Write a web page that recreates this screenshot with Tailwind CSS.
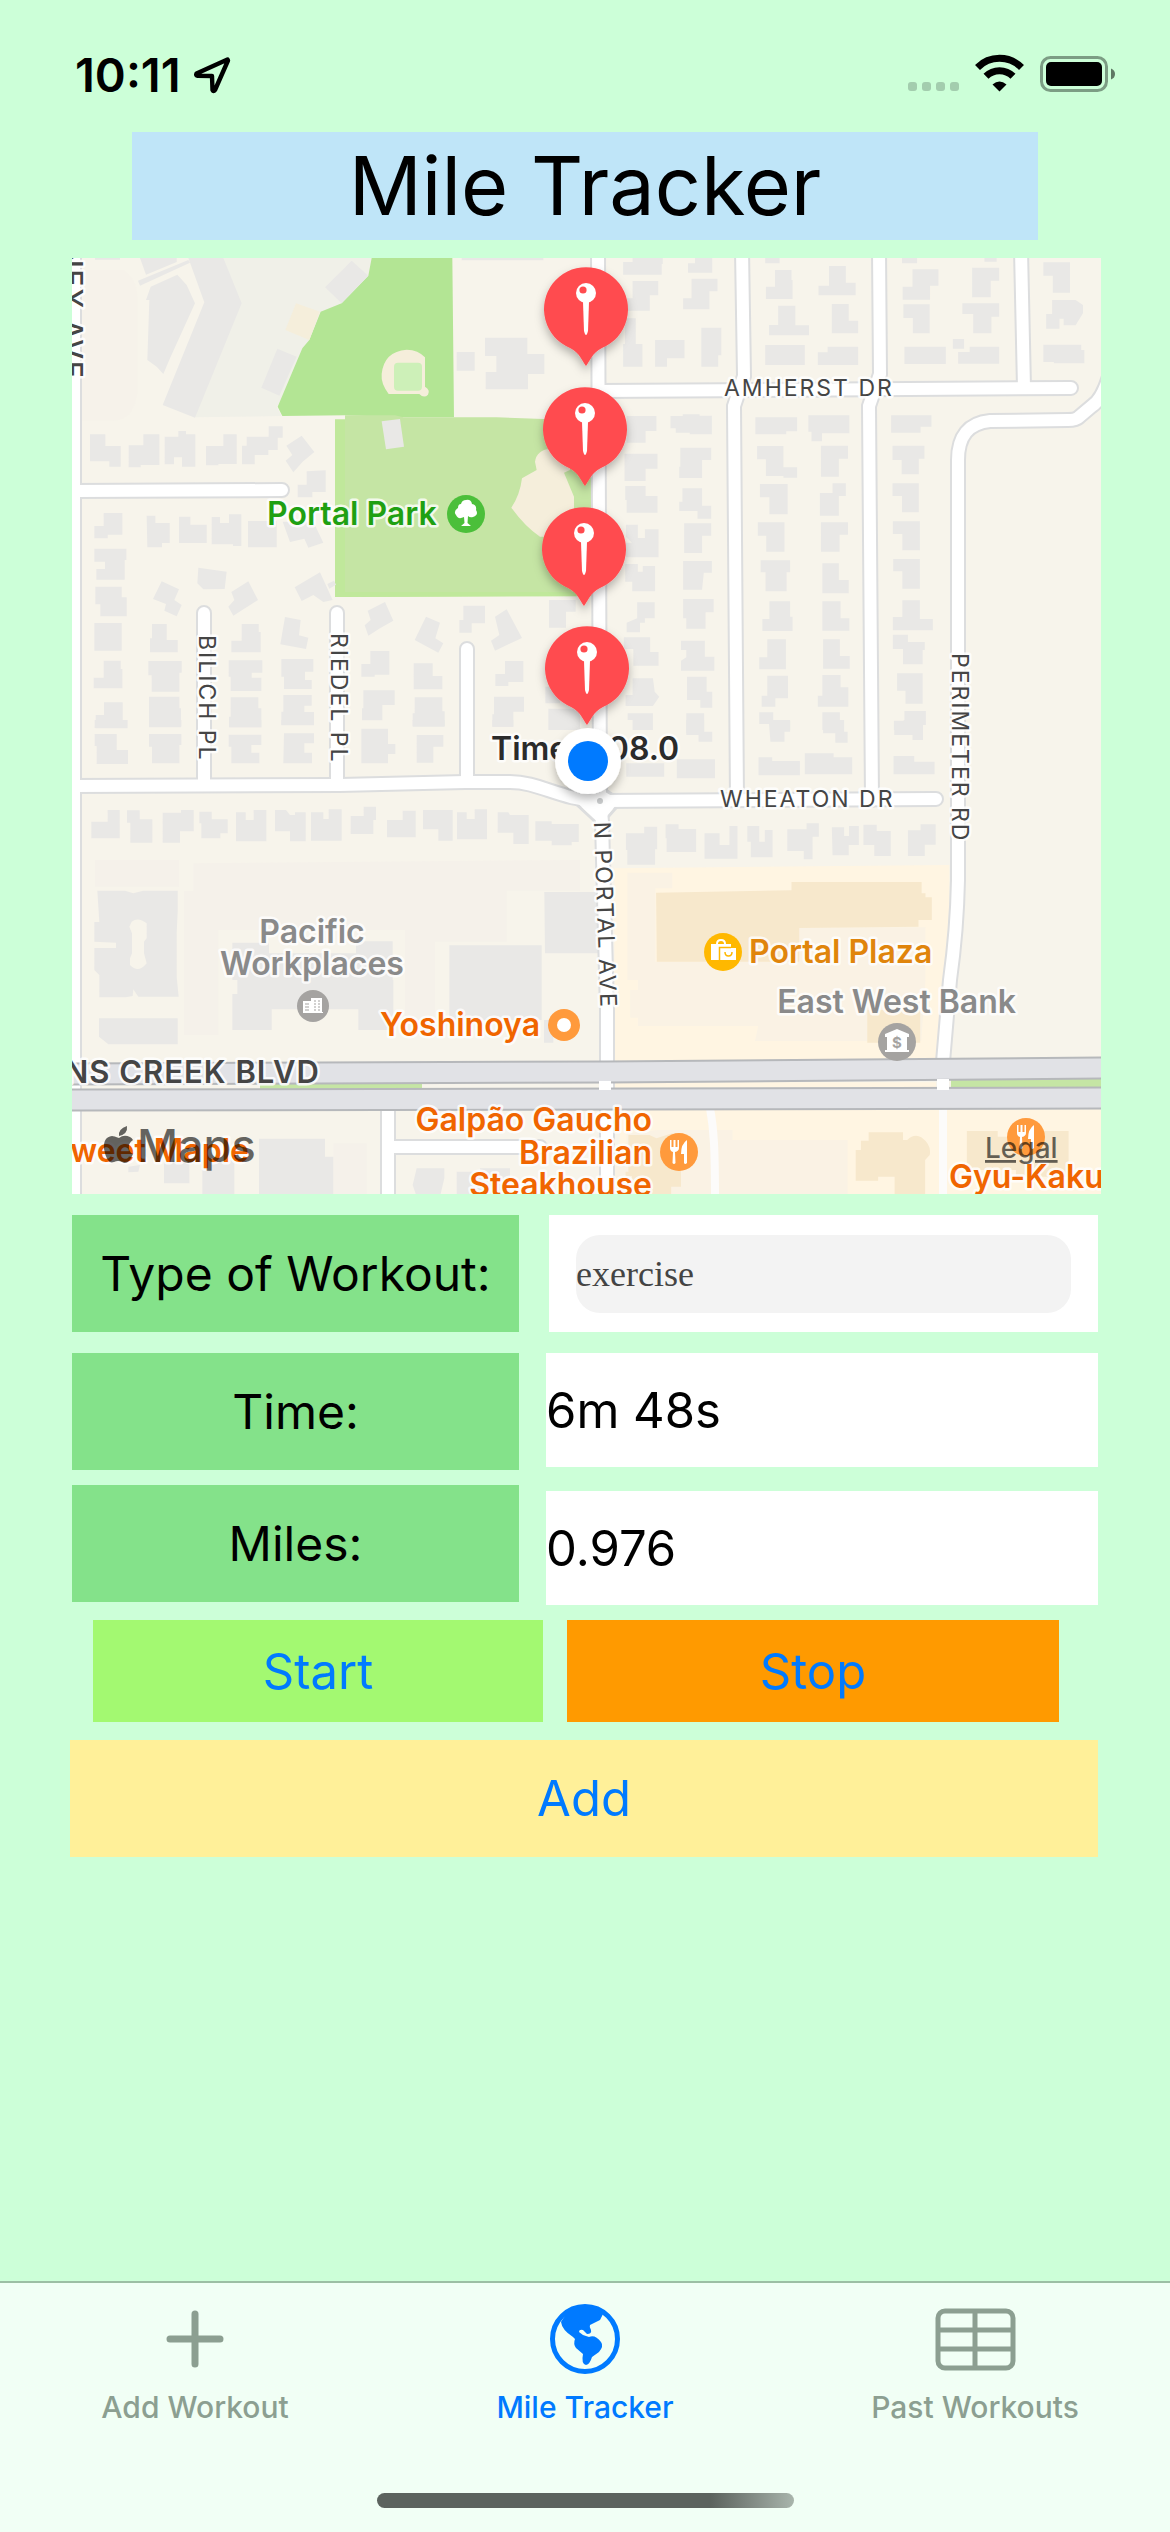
<!DOCTYPE html>
<html lang="en">
<head>
<meta charset="utf-8">
<meta name="viewport" content="width=device-width, initial-scale=1">
<title>Mile Tracker</title>
<script src="https://cdn.jsdelivr.net/npm/@tailwindcss/browser@4"></script>
</head>
<body class="flex min-h-screen flex-col bg-[#ccffd8] font-[Inter,sans-serif] text-black">

<!-- Status bar -->
<header class="flex h-[132px] items-start justify-between pt-[50px] pr-[54px] pl-[75px]">
  <div class="flex items-center gap-3">
    <span class="text-[47px] leading-[50px] font-semibold">10:11</span>
    <svg class="h-[38px] w-[38px]" viewBox="0 0 38 38" fill="none" stroke="#000" stroke-width="4.4" stroke-linejoin="round" aria-hidden="true"><path d="M34.5 3.5L3.5 17.5Q2.500 19.500 4.500 19.800L19 20L19.500 34Q20.500 36 22 34L35 4.500Z"/></svg>
  </div>
  <div class="flex items-center gap-4 pt-1">
    <svg class="h-[40px] w-[52px]" viewBox="0 0 52 40" fill="#a3cdae" aria-hidden="true"><rect x="1" y="28" width="9" height="9" rx="3"/><rect x="15" y="28" width="9" height="9" rx="3"/><rect x="29" y="28" width="9" height="9" rx="3"/><rect x="43" y="28" width="9" height="9" rx="3"/></svg>
    <svg class="h-[40px] w-[49px]" viewBox="0 0 49 40" fill="none" stroke="#000" aria-hidden="true"><path d="M2.500 13.500A31 31 0 0 1 46.500 13.500" stroke-width="7"/><path d="M11 22.300A19 19 0 0 1 38 22.300" stroke-width="7"/><path d="M24.500 37.500L17.500 30.500Q24.500 24.500 31.500 30.500Z" fill="#000" stroke="none"/></svg>
    <svg class="h-[40px] w-[76px]" viewBox="0 0 76 40" aria-hidden="true"><rect x="1.500" y="3.500" width="65" height="33" rx="9" fill="none" stroke="#7c9d84" stroke-width="3"/><rect x="6" y="8" width="56" height="24" rx="5"/><path d="M71 14.500Q75 16 75 20T71 25.500Z" fill="#5f7864"/></svg>
  </div>
</header>

<main class="flex flex-1 flex-col">
  <h1 class="mx-[132px] flex h-[108px] items-center justify-center bg-[#bfe5f8] text-[81px] leading-none">Mile Tracker</h1>

  <section class="mt-[18px] mr-[69px] ml-[72px]" aria-label="Route map">
    <svg class="block h-auto w-full" viewBox="72 258 1029 936">
      <defs>
        <filter id="drop" x="-40%" y="-40%" width="180%" height="180%"><feDropShadow dx="0" dy="5" stdDeviation="5" flood-opacity=".28"/></filter>
        <g id="pin">
          <path d="M0 57C-4 52 -6 44 -16 39A42 42 0 1 1 16 39C6 44 4 52 0 57Z" fill="#ff4b50"/>
          <circle cy="-16" r="10" fill="#fff"/><circle cx="-3" cy="-19" r="3.600" fill="#ff4b50"/>
          <path d="M-3 -7H3L2 22Q0 30 -2 22Z" fill="#fff"/>
        </g>
        <g id="fork" fill="#fff">
          <path d="M-9 -12V-4Q-9 -1 -6 0L-6.500 11Q-5 13 -3.500 11L-4 0Q0 -1 0 -4V-12H-1.500V-5H-3.500V-12H-5.500V-5H-7.500V-12Z"/>
          <path d="M8 -12V11Q6 13 5 11V2H2Q2 -8 8 -12Z"/>
        </g>
      </defs>

      <rect x="72" y="258" width="1029" height="936" fill="#f7f4eb"/>

      <!-- School grounds and parks -->
      <g transform="translate(60 250) scale(.33333)">
        <path d="M490 24H935V80L650 470L665 498L400 502Z" fill="#f0f0e8"/>
        <path d="M66 60H190Q232 90 232 140V430Q220 512 160 512H66Z" fill="#f6f2ea"/>
        <path d="M935 24H1177L1182 502H1030L855 496L667 498L653 470L727 295L748 270L782 185L845 160L925 77Z" fill="#b3e594"/>
        <path d="M825 508H870V1041H825Z" fill="#c0e89b"/>
        <path d="M855 496H1005L1030 502H1310L1600 512V1037L855 1041Z" fill="#c5e5a4"/>
        <path d="M825 1026H1600V1039L825 1041Z" fill="#c0e89b"/>
        <path d="M708 160L780 185L748 270L676 240Z" fill="#f5eedb"/>
        <path d="M1040 299Q1075 300 1095 322V410Q1112 420 1104 434Q1092 446 1078 432H986Q962 400 965 372Q972 304 1040 299Z" fill="#f5eedb"/>
        <rect x="1002" y="338" width="84" height="84" rx="12" fill="#cdf0b8"/>
        <path d="M1425 635Q1430 600 1470 596H1530V660L1512 668L1542 740V860H1440Q1395 830 1354 773Q1380 735 1386 685L1430 660Z" fill="#f5eedb"/>
        <path d="M965 514L1020 507L1032 590L978 598Z" fill="#e9e8e6"/>
      </g>

      <!-- Shopping district -->
      <g transform="translate(560 720) scale(.35075 .33333)">
        <path d="M155 445L1110 435V780L1075 1020L155 1024Z M180 1168H1545V1430H150Z M155 1087H1072V1103H155Z" fill="#fff5e2"/>
        <path d="M192 458H320V505H272V725H680V622H1042V780L1030 963H556L565 918H222V893H200V810H222V780H192Z M190 1240L280 1230H492V1260H820V1430H150V1300H190Z" fill="#faf2e4"/>
        <path d="M274 518L660 511V486H1031V520H1042V532H1060V600H1022V620L682 624V725H276Z M876 870H1027V968H876Z M195 1245H255L275 1255L320 1240L345 1260V1400H317V1430H205V1368H187V1355H195Z M880 1237H978V1260H990Q1010 1240 1030 1252Q1060 1275 1054 1305L1041 1320V1430H954V1370H907V1382H843V1290H858V1262H880Z M1160 1233H1248V1250H1380V1233H1450V1370H1300V1350H1160Z" fill="#f7e8cc"/>
      </g>

      <!-- Parking lots -->
      <g transform="translate(60 720) scale(.33333)" fill="#f5f1ea">
        <path d="M105 420H357V500H105Z M400 430L1560 420V512H1340V665H1125V945H1035V630H475V945H372V512H400Z M820 1270H920V1430H820Z"/>
      </g>

      <!-- Buildings, north-west blocks -->
      <g transform="translate(60 250) scale(.33333)" fill="#e9e8e6">
        <path d="M240 24H350V36L258 74Z M234 92L385 30L390 38L240 107Z M105 24H180V29H105Z M1205 24H1450V31H1205Z M272 110L352 74L380 105L405 160L330 325L310 372L290 350L262 330L268 150H258Z M385 24H490L545 160L405 503L308 465L433 157Z M875 32L925 77L845 160L795 112Z M652 296L710 320L658 437L604 413Z M1190 306H1244V362H1190Z M1275 263H1402V312H1453V372H1404V418H1277V366H1309V318H1275Z"/>
        <path d="M90 553H136V588H182V650H148V634H90Z M206 586H250V553H298V645H242V652H206Z M314 560H355V543H378V553H406V650H366V622H342V643H314Z M438 588H490V553H530V642H475V646H438Z M560 560H626V529H668V563H653V600H625V615H584V643H546V587H560Z M725 557L763 606L728 635L700 667L677 632L697 615L679 587Z M740 664L797 661V726H757V742H713V704H740Z"/>
        <path d="M103 828H131V789H187V854H143V865H103Z M260 797H286V819H329V879H306V892H262Z M357 800H391V824H440V879H357Z M455 801H480V819H507V793H544V888H519V883H455Z M564 813H650V892H564Z M668 815H760L790 878L745 893L733 866L690 876Z"/>
        <path d="M103 896H199V930H194V989H109V957H135V935H103Z M106 1010H185V1042H200V1099H121V1063H106Z M103 1119H185V1202H103Z M131 1232H182V1257H187V1315H101V1283H131Z M132 1357H188V1410H202V1435H107V1395H132Z"/>
        <path d="M415 953L500 965L494 1017L430 1018L412 1000Z M305 994L357 1018L343 1050L365 1065L350 1099L313 1082L318 1062L279 1047Z M565 994L594 1050L555 1075L520 1097L505 1070L523 1050L514 1026Z M780 967L818 1050L790 1056L760 1035L725 1053L704 1012Z M802 1002L822 992L828 1004L808 1016Z"/>
        <path d="M276 1122H320V1170H353V1207H270V1165H276Z M265 1233H365V1268H358V1325H275V1276H265Z M267 1340H358V1375H363V1432H267Z M545 1122H596V1146H602V1207H514V1172H545Z M506 1231H607V1268H575V1283H604V1323H512V1280H506Z M512 1342H595V1375H604V1432H507V1400H512Z M675 1101L722 1110L717 1156L745 1163L738 1197L661 1183Z M664 1227H760V1265H735V1290H755V1317H672V1280H664Z M670 1335H755V1367H733V1386H762V1424H664V1385H670Z"/>
        <path d="M975 1056L1000 1112L960 1135L925 1157L914 1126L932 1110L923 1082Z M931 1203H988V1274H944V1280H904V1242H931Z M910 1321H1004V1365H967V1411H906V1375H910Z M1098 1100L1140 1118L1126 1165L1150 1180L1135 1208L1064 1170Z M1061 1240H1118V1278H1147V1318H1061Z M1064 1342H1147V1384H1154V1430H1058V1390H1064Z M1210 1067H1275V1120H1235V1148H1198V1110H1210Z M1340 1078L1386 1164L1305 1202L1293 1172L1318 1155L1305 1100Z M1335 1233H1390V1296H1345V1308H1306V1272H1335Z M1302 1340H1392V1385H1360V1430H1297V1393H1302Z M1467 1050H1547V1085H1518V1133H1467Z M1456 1310H1500V1360H1456Z M1465 1376H1560V1440H1465Z"/>
      </g>

      <!-- Buildings, north-east blocks -->
      <g transform="translate(560 250) scale(.35075 .33333)" fill="#e9e8e6">
        <path d="M207 24H293V42H290V74H180V36H207Z M385 24H434V68H365V40H385Z M585 24H626V40H585Z M975 24H1018V40H975Z M1210 24H1245V35H1210Z M207 93H280V136H256V182H190V145H207Z M375 86H449V124H426V178H351V145H375Z M185 205H216V282H235V350H180V282H185Z M271 270H355V325H305V350H271Z M403 233H460V316H451V350H403Z"/>
        <path d="M613 60H660V90H663V147H587V110H613Z M767 48H815V98H843V136H737V107H767Z M622 167H671V226H710V256H596V225H622Z M775 162H823V212H850V250H775Z M585 285H698V345H585Z M763 290H850V345H735V307H763Z M1005 58H1079V107H1055V149H977V110H1005Z M1175 53H1252V92H1228V142H1175Z M979 163H1054V250H1006V204H979Z M1147 160H1252V200H1230V250H1178V192H1147Z M982 290H1100V342H982Z M1120 267H1152V296H1120Z M1168 290H1252V341H1135V306H1168Z M1378 37H1454V128H1405V77H1378Z M1403 150H1470L1491 165V190L1470 226H1436V206H1424V236H1386V192H1403Z M1378 284H1486V300H1495V340H1408V336H1378Z"/>
        <path d="M190 498H275V543H244V578H190Z M315 498H350V493H398V497H433V553H370V548H330V535H315Z M557 502H676V544H645V553H557Z M708 496H825V550H747V574H717V545H708Z M944 496H1059V530H1028V548H944Z M184 611H278V656H244V693H184Z M343 593H431V630H405V684H340V650H343Z M562 588H637V652H676V683H637V678H587V628H562Z M744 587H821V626H795V680H744Z M948 587H1039V626H1023V673H974V630H948Z M186 708H244V738H278V788H190V750H186Z M349 715H405V767H431V806H392V783H340V755H349Z M570 702H649V793H597V742H570Z M777 700H815V738H795V797H741V729H777Z M948 700H1023V787H975V738H948Z"/>
        <path d="M188 824H222V864H242V838H281V922H188V878H205L188 860Z M354 820H431V857H405V909H354Z M564 817H640V905H588V857H564Z M744 817H821V854H797V905H744Z M949 814H1026V901H976V852H949Z M186 942H222V965H236V948H271V1024H206V995H186Z M351 933H433V968H410L405 1019H351Z M572 931H656V967H646V1024H586V967H572Z M748 940H795V990H823V1030H748Z M950 927H1026V1016H976V964H950Z M220 1057H270V1105H242V1118H228V1147H190V1118L220 1105Z M351 1047H438V1087H415V1136H360V1105H351Z M597 1054H656V1100H663V1143H577V1107H597Z M748 1054H800V1105H825V1142H748Z M976 1051H1026V1107H1063V1141H949V1101H976Z"/>
        <path d="M182 1162H257V1206H281V1247H209V1197H182Z M345 1172H413V1220H440V1262H345V1232L360 1222V1200H345Z M591 1168H644V1258H568V1222H591Z M750 1168H798V1218H826V1256H750Z M949 1154H992V1176H1040V1200H1034V1243H978V1197H949Z M207 1285H265L270 1325L283 1340L265 1368H187V1335H207Z M362 1280H418V1325H434V1373H400V1350H362Z M591 1277H650V1345H614V1370H575V1337H591Z M748 1275H800V1312H822V1370H735V1337H748Z M961 1270H1034V1361H985V1322H961Z M193 1390H265V1440H207V1410H193Z M360 1390H411V1450H360Z M568 1387H608V1413H656V1440H600V1422H568Z M748 1387H798V1440H748Z M982 1383H1043V1425H1030V1440H952V1412H982Z"/>
      </g>

      <!-- Buildings, south-west blocks -->
      <g transform="translate(60 720) scale(.33333)" fill="#e9e8e6">
        <path d="M104 0H202V24H104Z M276 0H364V20H276Z M508 0H604V22H508Z M664 0H762V16H664Z M1058 0H1154V18H1058Z M1297 0H1360V20H1297Z M104 42H170V90H204V132H110V78H104Z M267 42H364V75H358V130H276V80H267Z M506 44H604V75H574V98H598V130H514V80H506Z M672 40H762V70H733V98H756V130H670Z M904 26H984V72H1006V102H984V130H904Z M1070 45H1150V80H1120V128H1070Z"/>
        <path d="M94 305H143V270H179V355H94Z M201 271H239V298H277V368H211V308H201Z M308 278H363V270H401V334H360V368H308Z M418 275H455V298H503V340H481V355H424V310H418Z M528 277H557V300H581V270H619V364H528Z M645 270H678L690 285H705V277H737V364H690V334H645Z M753 277H790V297H806V268H845V362H753Z M872 288H911V260H948V300H940V342H872Z M981 300H1028V272H1067V352H981Z M1089 270H1178V362H1135V328H1089Z M1191 277H1220V297H1244V268H1281V358H1191Z M1313 277H1345L1350 285H1406V372H1360V338H1313Z M1426 304H1475V312H1556V366H1535V376H1475V362H1426Z"/>
        <path fill-rule="evenodd" d="M112 512H195L220 520L250 512H353V575L350 640V770L356 830H235L220 808L218 828L197 832H118V765L103 750V684H168V668L103 665V606H118Z M215 605Q235 590 260 610V655L252 665V700L260 730Q235 762 210 735V715L216 700V640L208 620Z"/>
        <path d="M117 895H353V973H145L117 950Z M517 668H627V700H888V664H998V820H984V780H1000V930H895V868H635V930H517V822H532V780H517Z M1168 676H1445V900H1480V968H1452V900H1168Z M1453 516H1620V700H1455Z M597 1256H795V1310H820V1430H597Z M312 1320H388V1390H312Z M427 1320H523V1430H427Z M1070 1345H1153V1375L1140 1430H1070L1058 1395Z M1190 1355H1260V1345H1350V1430H1190Z M205 1340L240 1335L235 1355L205 1357Z"/>
      </g>

      <!-- Buildings, centre row -->
      <g transform="translate(560 720) scale(.35075 .33333)" fill="#e9e8e6">
        <path d="M0 312H52V365H30V374H0Z M188 340H240V320H277V388H271V434H192V390H188Z M301 313H338V327H388V396H304V355H301Z M412 340H455V375H483V318H506V416H412Z M534 318H568V365H584V330H606V412H544V365H534Z M648 328H703V310H738V350H720V418H695V393H648Z M775 322H810V348H824V318H852V375H823V406H777Z M865 314H903V333H943V408H896V375H865Z M992 331H1028V313H1071V374H1040V408H992Z M189 130H297V170H189Z M333 118H442V175H333Z M566 112H605V123H684V166H566Z M698 100H780V112H833V163H698Z M951 108H1010V125H1068V163H951Z M595 0H656V35H640V65H600Z M750 0H810V35H820V68H785V40H750Z M953 15H980V0H1035V60H1005V45H953Z M360 0H411V35H434V65H395V45H360Z"/>
      </g>

      <!-- Street casings -->
      <g fill="none" stroke="#dcddde" stroke-width="16" stroke-linecap="round">
        <path d="M74 250V1200M74 491L282 490M204 613V784M337 613V784M467 649V780"/>
        <path d="M73 786L340 785L465 782H510C540 782 560 800 600 801L936 799"/>
        <path d="M598 250L600 800L602 822L607 1010V1200M599 391L1071 388"/>
        <path d="M742 250L744 376L734 406L737 800M879 250L880 374L869 406L872 800M1021 250L1024 388"/>
        <path d="M1112 366Q1104 398 1092 406L1079 417Q1076 420 1068 420L990 421Q958 424 958 460V880Q957 930 950 980L943 1062"/>
        <path d="M388 1100V1200M388 1147H540"/>
        <path d="M575 803L600 826L622 801L600 786Z" stroke-width="3"/>
      </g>
      <!-- Street surfaces -->
      <g fill="none" stroke="#fff" stroke-width="12" stroke-linecap="round">
        <path d="M74 250V1200M74 491L282 490M204 613V784M337 613V784M467 649V780"/>
        <path d="M73 786L340 785L465 782H510C540 782 560 800 600 801L936 799"/>
        <path d="M598 250L600 800L602 822L607 1010V1200M599 391L1071 388"/>
        <path d="M742 250L744 376L734 406L737 800M879 250L880 374L869 406L872 800M1021 250L1024 388"/>
        <path d="M1112 366Q1104 398 1092 406L1079 417Q1076 420 1068 420L990 421Q958 424 958 460V880Q957 930 950 980L943 1062"/>
        <path d="M388 1100V1200M388 1147H540"/>
        <path d="M710 1108C714 1130 715 1150 715 1200M943 1100V1200" stroke="#fcfbfa" stroke-width="8"/>
        <path d="M579 803L600 823L618 801L600 790Z" fill="#fff" stroke-width="2"/>
      </g>
      <circle cx="600" cy="801" r="3" fill="#c9cbcc"/>

      <!-- Boulevard -->
      <path d="M260 1083H422V1090H260Z M951 1078H1101V1090H951Z" fill="#c5e5a4"/>
      <g fill="none">
        <path d="M60 1074L607 1072L1110 1068M60 1100L1110 1098" stroke="#b6b8bb" stroke-width="23"/>
        <path d="M60 1074L607 1072L1110 1068M60 1100L1110 1098" stroke="#e1e2e6" stroke-width="19"/>
        <path d="M605 1081V1090M943 1079V1090" stroke="#fff" stroke-width="12"/>
      </g>

      <!-- Street names -->
      <g class="text-[23px] tracking-[2px]" fill="#454545" stroke="#fff" stroke-opacity=".85" stroke-width="5" stroke-linejoin="round" paint-order="stroke">
        <text transform="translate(724 396)">AMHERST DR</text>
        <text transform="translate(720 807)">WHEATON DR</text>
        <text transform="translate(199 635) rotate(90)">BILICH PL</text>
        <text transform="translate(331 633) rotate(90)">RIEDEL PL</text>
        <text transform="translate(952 653) rotate(90)">PERIMETER RD</text>
        <text transform="translate(594 822) rotate(88)">N PORTAL AVE</text>
        <text class="text-[28px] font-medium" transform="translate(62 380) rotate(90)" text-anchor="end">NEY AVE</text>
        <text class="text-[31px] font-semibold tracking-[1px]" x="320" y="1083" text-anchor="end">NS CREEK BLVD</text>
      </g>

      <!-- Places -->
      <g class="text-[32px] font-semibold" stroke="#fff" stroke-opacity=".8" stroke-width="5" stroke-linejoin="round" paint-order="stroke">
        <text x="267" y="525" fill="#1fa012">Portal Park</text>
        <text x="312" y="943" fill="#8a8a8a" text-anchor="middle">Pacific</text>
        <text x="312" y="975" fill="#8a8a8a" text-anchor="middle">Workplaces</text>
        <text x="1016" y="1013" fill="#8a8a8a" text-anchor="end">East West Bank</text>
        <text x="749" y="963" fill="#e0850c">Portal Plaza</text>
        <g fill="#f06500">
          <text x="540" y="1036" text-anchor="end">Yoshinoya</text>
          <text x="652" y="1131" text-anchor="end">Galpão Gaucho</text>
          <text x="652" y="1164" text-anchor="end">Brazilian</text>
          <text x="652" y="1196" text-anchor="end">Steakhouse</text>
          <text x="949" y="1188">Gyu-Kaku</text>
          <text x="249" y="1162" text-anchor="end">weet Maple</text>
        </g>
        <text x="491" y="760" fill="#2b2b2b">Time: 408.0</text>
      </g>

      <!-- Place badges -->
      <circle cx="466" cy="514" r="19" fill="#4bbf3a"/>
      <path d="M466 500Q471 499 472 504Q477 505 476 510Q479 515 473 517Q470 518 468 516L467.500 523L471 526H461L464.500 523L464 517Q458 520 456 515Q453 511 458 508Q458 504 461 504Q462 500 466 500Z" fill="#fff"/>
      <circle cx="313" cy="1006" r="16" fill="#a5a3a1"/>
      <path d="M303 1012V1001H311V998H322V1012H323V1013H303Z" fill="#fff"/>
      <path d="M305 1004H309M305 1007H309M305 1010H309" stroke="#a5a3a1"/>
      <path d="M314 1001H320M314 1004H320M314 1007H320M314 1010H320" stroke="#a5a3a1" stroke-dasharray="2 2"/>
      <circle cx="723" cy="952" r="19" fill="#ffb800"/>
      <path d="M711 944H731V948H720V958H711Z M720 948H736V960H720Z M711 957H719V960H711Z" fill="#fff"/>
      <path d="M717 944Q717 940 721 940T725 944" fill="none" stroke="#fff" stroke-width="2"/>
      <path d="M719.500 961V947.500H731M725 952Q725 956 728.500 956T732 952" fill="none" stroke="#ffb800" stroke-width="1.500"/>
      <circle cx="897" cy="1042" r="19" fill="#a5a3a1"/>
      <path d="M897 1029L909 1034V1037H907V1050H909V1052H885V1050H887V1037H885V1034Z" fill="#fff"/>
      <text class="text-[15px] font-bold" x="897" y="1048" text-anchor="middle" fill="#a5a3a1">$</text>
      <circle cx="564" cy="1025" r="16" fill="#ff9a3c"/><circle cx="564" cy="1025" r="7" fill="#fff"/>
      <circle cx="679" cy="1152" r="19" fill="#ff9a3c"/><use href="#fork" x="679" y="1152"/>
      <circle cx="1026" cy="1137" r="19" fill="#ff9a3c"/><use href="#fork" x="1026" y="1137"/>

      <!-- Route pins and current position -->
      <g filter="url(#drop)">
        <use href="#pin" x="586" y="309"/><use href="#pin" x="585" y="429"/><use href="#pin" x="584" y="549"/><use href="#pin" x="587" y="668"/>
      </g>
      <g filter="url(#drop)"><circle cx="588" cy="761" r="33" fill="#fff"/></g>
      <circle cx="588" cy="761" r="20" fill="#007aff"/>

      <!-- Attribution -->
      <g fill="#000" fill-opacity=".6">
        <path d="M127 1126Q128 1134 119 1136Q118 1129 127 1126Z M119 1138Q124 1134 130 1137Q132 1138 133 1140Q128 1143 129 1149Q130 1153 133 1154Q128 1166 122 1162Q118 1160 114 1162Q107 1165 104 1149Q103 1137 112 1136Q114 1136 119 1138Z"/>
        <text class="text-[45px] font-medium" x="137" y="1162">Maps</text>
        <a href="#legal"><text class="text-[28px] font-medium underline" x="985" y="1158">Legal</text></a>
      </g>
    </svg>
  </section>

  <!-- Workout details -->
  <section class="mx-[72px] mt-[21px] grid grid-cols-[447fr_552fr] gap-x-[27px] text-[49px] leading-none">
    <div class="flex flex-col text-[48px] leading-none">
      <label for="kind" class="flex h-[117px] items-center justify-center bg-[#84e28a] whitespace-nowrap">Type of Workout:</label>
      <label for="time" class="mt-[21px] flex h-[117px] items-center justify-center bg-[#84e28a]">Time:</label>
      <label for="miles" class="mt-[15px] flex h-[117px] items-center justify-center bg-[#84e28a]">Miles:</label>
    </div>
    <div class="flex flex-col">
      <div class="ml-[3px] flex h-[117px] items-center bg-white px-[27px]">
        <input id="kind" type="text" value="exercise" class="h-[78px] w-full rounded-3xl bg-[#f3f3f3] font-['Liberation_Serif',serif] text-4xl text-[#444]">
      </div>
      <output id="time" class="mt-[21px] flex h-[114px] items-center bg-white">6m 48s</output>
      <output id="miles" class="mt-6 flex h-[114px] items-center bg-white">0.976</output>
    </div>
  </section>

  <div class="mt-[15px] mr-[111px] ml-[93px] grid grid-cols-[450fr_492fr] gap-6 text-[49px] leading-none text-[#007aff]">
    <button type="button" class="h-[102px] bg-[#a3f971]">Start</button>
    <button type="button" class="h-[102px] bg-[#ff9a00]">Stop</button>
  </div>
  <button type="button" class="mt-[18px] mr-[72px] ml-[70px] h-[117px] bg-[#fff099] text-[49px] leading-none text-[#007aff]">Add</button>
</main>

<!-- Tab bar -->
<footer class="flex h-[251px] flex-col justify-between border-t-2 border-[#9cbfa4] bg-[#f1fff5] pb-6">
  <nav class="grid grid-cols-3 pt-[18px] text-[30px] leading-[36px] font-medium text-[#8c9f91]">
    <a href="#add" class="flex flex-col items-center gap-3">
      <svg class="h-[76px] w-[76px]" viewBox="0 0 76 76" stroke="currentColor" stroke-width="7" stroke-linecap="round" aria-hidden="true"><path d="M38 13V63M13 38H63"/></svg>
      Add Workout
    </a>
    <a href="#tracker" aria-current="page" class="flex flex-col items-center gap-3 text-[#007aff]">
      <svg class="h-[76px] w-[76px]" viewBox="0 0 76 76" aria-hidden="true"><circle cx="38" cy="38" r="32.500" fill="none" stroke="currentColor" stroke-width="5"/><path d="M14 21Q22 6 38 5.500Q48 6 56 13L53 19L43 24Q42 26 44 29Q45 33 40 33L36 29Q32 28 32 31L36 34L42 36Q48 33 54 41Q57 45 52 51L45 56Q43 63 39 64Q34 63 36 53L29 47Q26 43 28 38L26 36Q15 29 14 21Z" fill="currentColor"/></svg>
      Mile Tracker
    </a>
    <a href="#past" class="flex flex-col items-center gap-3">
      <svg class="h-[76px] w-[84px]" viewBox="0 0 84 76" fill="none" stroke="currentColor" stroke-width="5" aria-hidden="true"><rect x="5" y="10" width="75" height="57" rx="7"/><path d="M42 10V67M5 29H80M5 48H80"/></svg>
      Past Workouts
    </a>
  </nav>
  <div class="mx-auto h-[15px] w-[417px] rounded-full bg-linear-to-r from-[#5c635e] from-80% to-[#a9b5ac]"></div>
</footer>
</body>
</html>
